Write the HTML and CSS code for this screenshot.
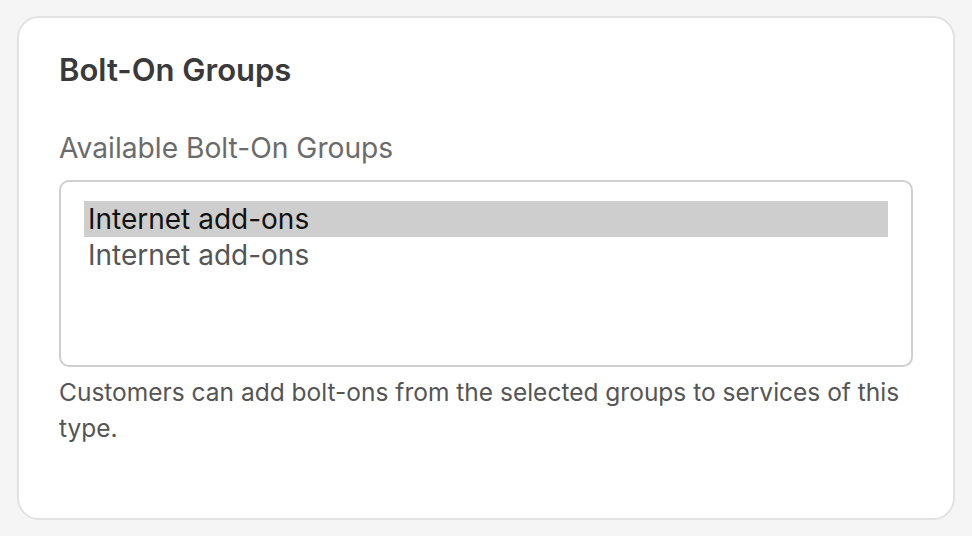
FILE: index.html
```html
<!DOCTYPE html>
<html lang="en">
<head>
<meta charset="utf-8">
<title>Bolt-On Groups</title>
<link rel="stylesheet" href="styles.css">
</head>
<body>
<section class="card">
  <h2 class="card-title">Bolt-On Groups</h2>
  <label class="field-label" for="groups">Available Bolt-On Groups</label>
  <div class="listbox" id="groups" role="listbox" aria-multiselectable="true">
    <div class="option is-selected" role="option" aria-selected="true">Internet add-ons</div>
    <div class="option" role="option" aria-selected="false">Internet add-ons</div>
  </div>
  <p class="help">Customers can add bolt-ons from the selected groups to services of this type.</p>
</section>
</body>
</html>
```
FILE: styles.css
```css
html, body {
  margin: 0;
  background: #f5f5f5;
}
body {
  padding: 16px 17px 0 17px;
  font-family: Inter, "Noto Sans", sans-serif;
}
.card {
  box-sizing: border-box;
  width: 938px;
  height: 504px;
  background: #fff;
  border: 2px solid #e2e2e2;
  border-radius: 22px;
  padding: 35px 40px 0 40px;
}
.card-title {
  margin: 0;
  font-size: 31px;
  line-height: 34px;
  font-weight: 600;
  color: #3a3a3a;
}
.field-label {
  display: block;
  margin-top: 42px;
  font-size: 28.2px;
  line-height: 39px;
  color: #6b6b6b;
}
.listbox {
  box-sizing: border-box;
  margin-top: 12px;
  height: 187px;
  border: 2px solid #cfcfcf;
  border-radius: 10px;
  padding: 19px 23px;
}
.option {
  font-size: 28px;
  line-height: 36px;
  padding: 0 4px;
  color: #555;
}
.option.is-selected {
  background: #cecece;
  color: #111;
}
.help {
  margin: 7px 0 0;
  font-size: 24.5px;
  line-height: 36px;
  color: #555;
}
```
